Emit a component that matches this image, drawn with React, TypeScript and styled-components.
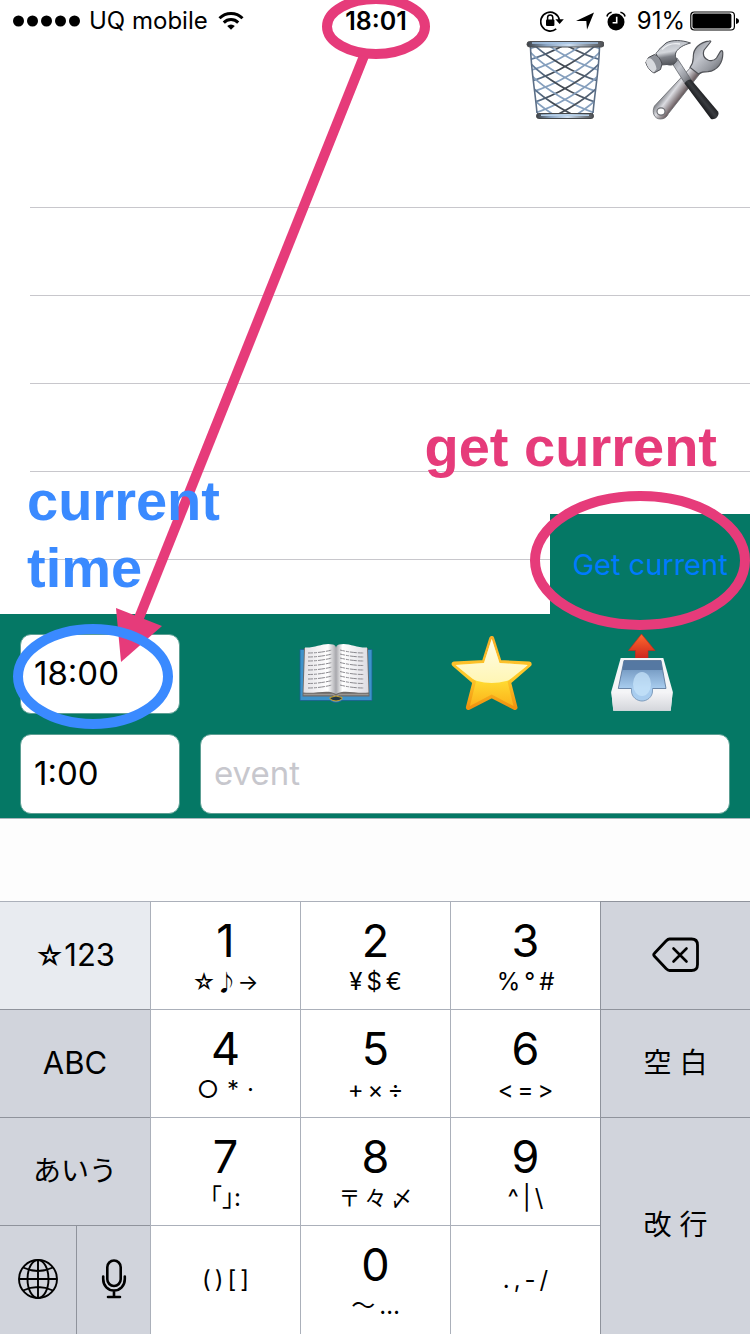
import React from "react";
import styled, { createGlobalStyle } from "styled-components";

const PINK = "#e63b7a";
const BLUE = "#3a8aff";
const GREEN = "#057865";

const GlobalStyle = createGlobalStyle`
  * { box-sizing: border-box; }
  body {
    margin: 0;
    background: #fff;
    color: #000;
    font-family: Inter, "Noto Sans CJK JP", sans-serif;
  }
  button, input { font: inherit; color: inherit; }
  svg { display: block; }
`;

const Page = styled.main`
  position: relative;
  display: flex;
  flex-direction: column;
  min-height: 100vh;
  overflow: hidden;
`;

const StatusBar = styled.header`
  display: grid;
  grid-template-columns: 1fr auto 1fr;
  align-items: center;
  height: 40px;
  padding: 2px 11px 0 13px;
  font-size: 24px;
  line-height: 38px;
`;

const StatusGroup = styled.div<{ $end?: boolean; $gap: number }>`
  display: flex;
  align-items: center;
  justify-content: ${(p) => (p.$end ? "flex-end" : "flex-start")};
  gap: ${(p) => p.$gap}px;
  white-space: nowrap;
`;

const Clock = styled.time`
  font-size: 25px;
  font-weight: 600;
`;

const BatteryLevel = styled.div`
  display: flex;
  align-items: center;
  gap: 5px;
`;

const Toolbar = styled.div`
  display: flex;
  justify-content: flex-end;
  gap: 40px;
  height: 80px;
  padding-right: 26px;
`;

const IconButton = styled.button`
  padding: 0;
  border: 0;
  background: none;
`;

const Schedule = styled.section`
  position: relative;
  height: 494px;
`;

const EmptyRows = styled.ul`
  margin: 0;
  padding: 0 0 0 30px;
  list-style: none;
`;

const EmptyRow = styled.li`
  height: 88px;
  border-bottom: 1px solid #c8c7cc;
`;

const GetCurrentButton = styled.button`
  position: absolute;
  right: 0;
  bottom: 0;
  width: 200px;
  height: 100px;
  padding: 0;
  border: 0;
  background: ${GREEN};
  color: #007aff;
  font-size: 29px;
  text-align: center;
`;

const EntryForm = styled.form`
  display: grid;
  grid-template-columns: 160px 1fr;
  gap: 20px;
  padding: 20px 20px 4px;
  background: ${GREEN};
`;

const Field = styled.input`
  width: 100%;
  min-width: 0;
  height: 80px;
  padding: 0 13px 3px;
  border: 1px solid #5c9f93;
  border-radius: 11px;
  background: #fff;
  font-size: 33px;
  &::placeholder { color: #c7c7cd; opacity: 1; }
`;

const EntryActions = styled.div`
  display: flex;
  justify-content: space-between;
  padding: 0 44px 0 92px;
`;

const SuggestionBar = styled.div`
  height: 83px;
  border-top: 1px solid #a9b5bb;
  background: #fdfdfd;
`;

const Keyboard = styled.section`
  display: grid;
  grid-template-columns: repeat(5, 1fr);
  grid-template-rows: repeat(3, 108px) minmax(109px, auto);
`;

type KeyTone = "plain" | "special" | "active";
const toneColor = { plain: "#fff", special: "#d1d4dc", active: "#e8ebf0" };

const Key = styled.button<{ $tone?: KeyTone; $tall?: boolean; $first?: boolean }>`
  display: flex;
  flex-direction: column;
  align-items: center;
  justify-content: center;
  grid-row: ${(p) => (p.$tall ? "span 2" : "auto")};
  min-width: 0;
  padding: 0 0 ${(p) => (p.$tone === "special" ? 2 : 0)}px;
  border: 0 solid ${(p) => (p.$tone === "special" ? "#8f939c" : "#abb0ba")};
  border-top-width: 1px;
  border-left-width: ${(p) => (p.$first ? 0 : 1)}px;
  background: ${(p) => toneColor[p.$tone ?? "plain"]};
  font-size: 32px;
`;

const SplitKeys = styled.div`
  display: grid;
  grid-template-columns: 76px 1fr;
`;

const Digit = styled.span`
  padding-top: 4px;
  font-size: 45px;
  line-height: 48px;
`;

const Hint = styled.span<{ $gap: number; $small?: boolean }>`
  display: flex;
  gap: ${(p) => p.$gap}px;
  font-size: ${(p) => (p.$small ? 22 : 24)}px;
  line-height: 34px;
`;

const KeyLabel = styled.span<{ $kana?: boolean }>`
  font-size: ${(p) => (p.$kana ? 28 : 31)}px;
  line-height: 40px;
  white-space: pre;
`;

const SmallStar = styled.span`
  font-size: 28px;
`;

const Markup = styled.svg`
  position: absolute;
  top: 0;
  left: 0;
  pointer-events: none;
`;

const Note = styled.p<{ $color: string; $top: number; $left?: number; $right?: number }>`
  position: absolute;
  top: ${(p) => p.$top}px;
  left: ${(p) => (p.$left === undefined ? "auto" : `${p.$left}px`)};
  right: ${(p) => (p.$right === undefined ? "auto" : `${p.$right}px`)};
  margin: 0;
  color: ${(p) => p.$color};
  font: bold 56px/67px "Liberation Sans", sans-serif;
  pointer-events: none;
`;

const SignalDots = () => (
  <svg width="68" height="12" aria-label="Signal strength">
    {[6, 20, 34, 48, 62].map((x) => (
      <circle key={x} cx={x - 0.5} cy="6" r="5.5" />
    ))}
  </svg>
);

const Wifi = () => (
  <svg width="28" height="20" viewBox="-2 0 28 20" fill="none" stroke="#000" strokeWidth="3">
    <path d="M1.5 7.2a16.3 16.3 0 0 1 23 0" />
    <path d="M5.8 11.6a10.2 10.2 0 0 1 14.4 0" />
    <path d="M13 18.8l-3.8-3.9a5.5 5.5 0 0 1 7.6 0z" fill="#000" stroke="none" />
  </svg>
);

const RotationLock = () => (
  <svg width="24" height="22" viewBox="0 0 24 22" fill="none" stroke="#000">
    <path d="M16.2 18.800A9.400 9.400 0 1 1 19.400 10" strokeWidth="1.700" />
    <path d="M15.400 9.200h8.400l-4.200 4.800z" fill="#000" stroke="none" />
    <rect x="6" y="9.500" width="8.400" height="6.500" rx="1" fill="#000" stroke="none" />
    <path d="M7.600 10V7.600a2.600 2.600 0 0 1 5.200 0V10" strokeWidth="1.500" />
  </svg>
);

const LocationArrow = () => (
  <svg width="20" height="18" viewBox="0 0 20 18">
    <path d="M19 .5L12 17.800 11.300 9 1 9z" />
  </svg>
);

const Alarm = () => (
  <svg width="20" height="20" viewBox="0 0 20 20">
    <circle cx="10" cy="11" r="8.500" />
    <path d="M1 5.500C1.400 3.300 3 1.700 5.600 1.200M19 5.500c-.4-2.200-2-3.800-4.600-4.300" stroke="#000" strokeWidth="1.600" fill="none" />
    <path d="M10.700 5.800v6H6.600" stroke="#fff" strokeWidth="1.600" fill="none" />
  </svg>
);

const Battery = () => (
  <svg width="49" height="20" viewBox="0 0 49 20">
    <rect x=".8" y="1" width="43.600" height="18" rx="3.500" fill="none" stroke="#000" strokeWidth="1.200" />
    <rect x="2.400" y="2.600" width="39" height="14.800" rx="1.800" />
    <path d="M46 7c1.800.3 3 1.500 3 3s-1.200 2.700-3 3z" />
  </svg>
);

const meshOffsets = [-44, -33, -22, -11, 0, 11, 22, 33, 44, 55, 66];

const Trash = () => (
  <svg width="80" height="80" viewBox="0 0 80 80">
    <defs>
      <linearGradient id="rim" x2="1">
        <stop offset="0" stopColor="#3b3f44" />
        <stop offset=".25" stopColor="#8aa4c2" />
        <stop offset=".55" stopColor="#cfe0f2" />
        <stop offset="1" stopColor="#4a4c50" />
      </linearGradient>
      <linearGradient id="mesh" x1="4" y1="0" x2="78" y2="0" gradientUnits="userSpaceOnUse">
        <stop offset="0" stopColor="#6c8db3" />
        <stop offset=".35" stopColor="#3f4750" />
        <stop offset=".65" stopColor="#4b525b" />
        <stop offset="1" stopColor="#5b7596" />
      </linearGradient>
      <clipPath id="basket">
        <path d="M6 7C7 30 11 50 13 74H69C70 52 74 30 76 7z" />
      </clipPath>
    </defs>
    <g clipPath="url(#basket)" fill="none">
      {meshOffsets.map((o, i) => (
        <path
          key={o}
          d={`M5 ${o}C20 ${o + 16} 50 ${o + 34} 77 ${o + 42}M77 ${o}C62 ${o + 16} 32 ${o + 34} 5 ${o + 42}`}
          stroke={i % 2 ? "#86a0be" : "url(#mesh)"}
          strokeWidth="1.700"
        />
      ))}
    </g>
    <path d="M6.500 7C7 30 11 50 13 73M75.500 7C75 30 71 50 69 73" fill="none" stroke="#5b6e86" strokeWidth="1.600" />
    <rect x="3" y="1.500" width="77" height="5.500" rx="2.700" fill="url(#rim)" stroke="#4d4e50" />
    <path d="M8 3H74" stroke="#a4c3e4" strokeWidth="1.500" />
    <rect x="12.500" y="73.500" width="57" height="5" rx="2.300" fill="url(#rim)" stroke="#454749" />
    <path d="M17 75.300H65" stroke="#b6d0e9" strokeWidth="1.500" />
  </svg>
);

const Tools = () => (
  <svg width="80" height="80" viewBox="0 0 80 80">
    <defs>
      <linearGradient id="steel" x1="0" y1="0" x2="1" y2="1">
        <stop offset="0" stopColor="#85888f" />
        <stop offset=".4" stopColor="#c3c6cd" />
        <stop offset=".7" stopColor="#979aa1" />
        <stop offset="1" stopColor="#54565b" />
      </linearGradient>
      <linearGradient id="head" x1="24" y1="2" x2="28" y2="26" gradientUnits="userSpaceOnUse">
        <stop offset="0" stopColor="#b9bdc4" />
        <stop offset=".4" stopColor="#d4d7dc" />
        <stop offset=".6" stopColor="#7d8087" />
        <stop offset="1" stopColor="#4a4c51" />
      </linearGradient>
      <linearGradient id="wrench" x1="26" y1="46" x2="38" y2="55" gradientUnits="userSpaceOnUse">
        <stop offset="0" stopColor="#85878d" />
        <stop offset=".4" stopColor="#dcdde2" />
        <stop offset="1" stopColor="#6e6164" />
      </linearGradient>
      <linearGradient id="grip" x1="52" y1="62" x2="62" y2="54" gradientUnits="userSpaceOnUse">
        <stop offset="0" stopColor="#111214" />
        <stop offset=".5" stopColor="#3a3c40" />
        <stop offset="1" stopColor="#17181a" />
      </linearGradient>
    </defs>
    <path d="M48 26L10.500 66C7.500 72 10 79 16.500 79c4 0 6.500-2 8-5.500L58 31z" fill="url(#wrench)" stroke="#66686d" strokeWidth=".8" />
    <ellipse cx="17" cy="71.500" rx="4" ry="3.600" fill="#fff" stroke="#6c6e73" strokeWidth="1.200" />
    <path d="M65.500.8C55 2.500 49 9 49.300 17c.1 4-.8 7-3.300 10.500L54.500 34c3-2 5.500-2.300 9.500-2.300C73 30.500 79.500 23 78.700 12c-.2-1.800-1.500-1.600-2.400-.3L72.500 18c-2 2.700-4.500 3.300-8 2.200-4-1.700-6.200-5-4.500-10L66.500 2c.5-.8 0-1.400-1-1.200z" fill="url(#steel)" stroke="#505257" strokeWidth="1.200" />
    <path d="M27 21.500l6-3.500L47 39.500l-6 4z" fill="url(#steel)" stroke="#65686e" strokeWidth=".8" />
    <path d="M40.500 43.500c1.500-2.600 3.500-4 6.500-4L74 71.500c2 4-2.500 9-7 7.500z" fill="url(#grip)" />
    <path d="M46.500 3C38 0 28-.5 22 3L15 9.500c-.8 2-2.500 2.500-3 4L17 25l6-.5c3 .8 5 .8 7-.5l3-3.500c-1.500-3-2.500-5.500-.8-8.700C35 7.500 39.500 5 46.500 3z" fill="url(#head)" stroke="#505359" strokeWidth="1" />
    <path d="M4.500 17.500l6-3c3 1 6 4 7.500 9.500l-1.500 5.500L10 33c-4-2-7-6-8.200-10.500z" fill="#8f9299" stroke="#4a4c51" strokeWidth="1" />
    <path d="M2 22c.5-3 2.500-4.500 4.500-3.500 3.500 2 5.500 6.500 6 10.500l-2.700 3.500C6 30.500 3 27 2 22z" fill="#d8dade" />
    <path d="M18 9.500c5-5.500 11-6.500 18-5.500" fill="none" stroke="#eef0f3" strokeWidth="1.300" />
  </svg>
);

const bookLines = [17, 21, 25, 29.5, 34, 38.5, 43, 47.5, 52];

const Book = () => (
  <svg width="88" height="80" viewBox="0 0 88 80">
    <defs>
      <linearGradient id="pageLeft" x2="1">
        <stop offset="0" stopColor="#e2e1e5" />
        <stop offset=".75" stopColor="#fff" />
        <stop offset="1" stopColor="#a8a8ad" />
      </linearGradient>
      <linearGradient id="pageRight" x2="1">
        <stop offset="0" stopColor="#a8a8ad" />
        <stop offset=".2" stopColor="#fff" />
        <stop offset="1" stopColor="#dddce2" />
      </linearGradient>
    </defs>
    <path d="M8 15.500H80V66.500H50q-6 4-12 0H8z" fill="#3d93cb" stroke="#1c5f91" strokeWidth=".8" />
    <path d="M12 14L10.500 62.500H40q4 3 8 0H77.500L76 14z" fill="#6d6a68" />
    <path d="M11.500 60.500H41l3 2 3-2H76.500" fill="none" stroke="#9a9793" strokeWidth="1.500" />
    <path d="M13 13.500C24 14 32 8 41 10.500q3 1 3 3.500V60C36 55 24 60 11.500 58.500z" fill="url(#pageLeft)" />
    <path d="M75 13.500C64 14 56 8 47 10.500q-3 1-3 3.500V60C52 55 64 60 76.500 58.500z" fill="url(#pageRight)" />
    {bookLines.map((y) => (
      <path key={y} d={`M16 ${y + 2}Q28 ${y + 2} 40 ${y - 1}M48 ${y - 1}Q60 ${y + 2} 72 ${y + 2}`} fill="none" stroke="#8b8a8f" strokeWidth="1" strokeDasharray="5 1 3 1 7 1" />
    ))}
    <path d="M38 63.500q6-3 12 0v1.500q-6 4-12 0z" fill="#243947" stroke="#caa32c" strokeWidth="1" />
  </svg>
);

const Star = () => (
  <svg width="88" height="80" viewBox="0 0 88 80">
    <defs>
      <linearGradient id="gold" x2="0" y2="1">
        <stop offset="0" stopColor="#f9ae27" />
        <stop offset=".55" stopColor="#ffcb2b" />
        <stop offset="1" stopColor="#f0920f" />
      </linearGradient>
      <linearGradient id="body" x2="0" y2="1">
        <stop offset="0" stopColor="#fff3a8" />
        <stop offset=".6" stopColor="#ffdc33" />
        <stop offset="1" stopColor="#fbaf18" />
      </linearGradient>
      <linearGradient id="shine" x2="0" y2="1">
        <stop offset="0" stopColor="#fffef4" />
        <stop offset="1" stopColor="#fff6b4" />
      </linearGradient>
      <clipPath id="starInner">
        <path d="M46.700 5L54.500 29 83 31 62.500 47.500 68.500 72 46.700 60.500 24.900 72 31 47.500 10.500 31 39 29z" />
      </clipPath>
    </defs>
    <path d="M46.700 4.500L54.300 28.500 84.200 30 63.500 48 70 73.500 46.700 61.500 23.400 73.500 30 48 9.200 30 39.200 28.500z" fill="url(#gold)" stroke="url(#gold)" strokeWidth="5" strokeLinejoin="round" />
    <g clipPath="url(#starInner)">
      <rect x="8" y="4" width="78" height="70" fill="url(#body)" />
      <ellipse cx="46.700" cy="22" rx="38" ry="27" fill="url(#shine)" />
    </g>
  </svg>
);

const Outbox = () => (
  <svg width="88" height="80" viewBox="0 0 88 80">
    <defs>
      <linearGradient id="arrowRed" x2="0" y2="1">
        <stop offset="0" stopColor="#ff6a2e" />
        <stop offset="1" stopColor="#c9201c" />
      </linearGradient>
      <linearGradient id="well" x2="0" y2="1">
        <stop offset="0" stopColor="#587da8" />
        <stop offset=".4" stopColor="#7ea3ca" />
        <stop offset="1" stopColor="#a9cdef" />
      </linearGradient>
      <linearGradient id="front" x2="0" y2="1">
        <stop offset="0" stopColor="#f5f5f7" />
        <stop offset="1" stopColor="#d4d6db" />
      </linearGradient>
    </defs>
    <path d="M43.500 0L57 16.500H50V26H37.500V16.500H30.500z" fill="url(#arrowRed)" stroke="#c52a1d" strokeWidth=".7" />
    <path d="M22.700 24H65.300L74.700 57.500 72.700 76.700H15.300L13.300 57.500z" fill="#f4f5f7" />
    <path d="M13.300 58H74.700L72.700 76.700H15.300z" fill="url(#front)" />
    <path d="M26 26.500H63L68 54.500H20.300z" fill="url(#well)" stroke="#526f93" strokeWidth=".8" />
    <path d="M26 27H63L64.500 36H24.500z" fill="#5578a2" />
    <path d="M33.500 54H54.500V57C54.500 63 49 67 44 67S33.500 63 33.500 57z" fill="#a9cdef" />
    <ellipse cx="44" cy="50" rx="9" ry="12" fill="#c9e5fb" opacity=".7" />
    <path d="M33.500 54.500V57C33.500 63 39 67 44 67S54.500 63 54.500 57V54.500" fill="none" stroke="#7f9dbd" strokeWidth="1" />
  </svg>
);

const Backspace = () => (
  <svg width="48" height="36" viewBox="0 0 48 36" fill="none" stroke="#000" strokeLinecap="round" strokeLinejoin="round">
    <path d="M17.500 2H39.500Q45.500 2 45.500 8V27.500Q45.500 33.500 39.500 33.500H17.500Q16 33.500 14 31.500L2.500 19.300Q1 17.700 2.500 16.200L14 4Q16 2 17.500 2z" strokeWidth="2.800" />
    <path d="M21.500 11.500l13 13M34.500 11.500l-13 13" strokeWidth="2.600" />
  </svg>
);

const Globe = () => (
  <svg width="40" height="40" viewBox="0 0 40 40" fill="none" stroke="#000" strokeWidth="1.900">
    <circle cx="20" cy="20" r="19" />
    <ellipse cx="20" cy="20" rx="10.500" ry="19" />
    <path d="M20 1V39M1 20H39M5 8.500Q20 15.500 35 8.500M5 31.500Q20 24.500 35 31.500" />
  </svg>
);

const Mic = () => (
  <svg width="26" height="40" viewBox="0 0 26 40" fill="none" stroke="#000" strokeWidth="2.600" strokeLinecap="round">
    <rect x="6.300" y="1.500" width="13.400" height="25.500" rx="6.700" />
    <path d="M2.200 17.500V20C2.200 27 7 31.500 13 31.500S23.800 27 23.800 20V17.500M13 32V38M7 38H19" />
  </svg>
);

type NumberKeyProps = { digit?: string; hints: string[]; gap?: number; small?: boolean };

const NumberKey = ({ digit, hints, gap = 4, small }: NumberKeyProps) => (
  <Key type="button">
    {digit && <Digit>{digit}</Digit>}
    <Hint $gap={gap} $small={small}>
      {hints.map((h) => <span key={h}>{h}</span>)}
    </Hint>
  </Key>
);

export default function App() {
  return (
    <Page>
      <GlobalStyle />
      <StatusBar>
        <StatusGroup $gap={8}>
          <SignalDots />
          <span>UQ mobile</span>
          <Wifi />
        </StatusGroup>
        <Clock>18:01</Clock>
        <StatusGroup $end $gap={11}>
          <RotationLock />
          <LocationArrow />
          <Alarm />
          <BatteryLevel>
            <span>91%</span>
            <Battery />
          </BatteryLevel>
        </StatusGroup>
      </StatusBar>
      <Toolbar>
        <IconButton type="button" aria-label="Delete"><Trash /></IconButton>
        <IconButton type="button" aria-label="Settings"><Tools /></IconButton>
      </Toolbar>
      <Schedule>
        <EmptyRows>
          {[1, 2, 3, 4, 5].map((n) => <EmptyRow key={n} />)}
        </EmptyRows>
        <GetCurrentButton type="button">Get current</GetCurrentButton>
      </Schedule>
      <EntryForm>
        <Field aria-label="Start time" defaultValue="18:00" />
        <EntryActions>
          <IconButton type="button" aria-label="Book"><Book /></IconButton>
          <IconButton type="button" aria-label="Favorite"><Star /></IconButton>
          <IconButton type="button" aria-label="Send"><Outbox /></IconButton>
        </EntryActions>
        <Field aria-label="Duration" defaultValue="1:00" />
        <Field aria-label="Event" placeholder="event" />
      </EntryForm>
      <SuggestionBar />
      <Keyboard aria-label="Keyboard">
        <Key type="button" $tone="active" $first>
          <KeyLabel><SmallStar>☆</SmallStar>123</KeyLabel>
        </Key>
        <NumberKey digit="1" hints={["☆", "♪", "→"]} gap={0} small />
        <NumberKey digit="2" hints={["¥", "$", "€"]} />
        <NumberKey digit="3" hints={["%", "°", "#"]} />
        <Key type="button" $tone="special" aria-label="Backspace"><Backspace /></Key>

        <Key type="button" $tone="special" $first><KeyLabel>ABC</KeyLabel></Key>
        <NumberKey digit="4" hints={["○", "*", "·"]} gap={8} />
        <NumberKey digit="5" hints={["+", "×", "÷"]} />
        <NumberKey digit="6" hints={["<", "=", ">"]} />
        <Key type="button" $tone="special"><KeyLabel $kana>空 白</KeyLabel></Key>

        <Key type="button" $tone="special" $first><KeyLabel $kana>あいう</KeyLabel></Key>
        <NumberKey digit="7" hints={["｢", "｣", ":"]} gap={0} />
        <NumberKey digit="8" hints={["〒", "々", "〆"]} gap={4} small />
        <NumberKey digit="9" hints={["^", "|", "\\"]} />
        <Key type="button" $tone="special" $tall><KeyLabel $kana>改 行</KeyLabel></Key>

        <SplitKeys>
          <Key type="button" $tone="special" $first aria-label="Switch keyboard"><Globe /></Key>
          <Key type="button" $tone="special" aria-label="Dictate"><Mic /></Key>
        </SplitKeys>
        <NumberKey hints={["(", ")", "[", "]"]} />
        <NumberKey digit="0" hints={["〜", "…"]} />
        <NumberKey hints={[".", ",", "-", "/"]} />
      </Keyboard>

      <Markup width="750" height="740" fill="none" strokeWidth="10">
        <g stroke={PINK}>
          <ellipse cx="376" cy="26.500" rx="49" ry="27.500" />
          <ellipse cx="640" cy="560.500" rx="105" ry="64.500" />
          <path d="M364 56L139 618" />
        </g>
        <path d="M116 608L162 626 121 662z" fill={PINK} />
        <ellipse cx="93" cy="676.500" rx="75" ry="47.500" stroke={BLUE} />
      </Markup>
      <Note $color={PINK} $top={413} $right={33}>get current</Note>
      <Note $color={BLUE} $top={467} $left={27}>current<br />time</Note>
    </Page>
  );
}
